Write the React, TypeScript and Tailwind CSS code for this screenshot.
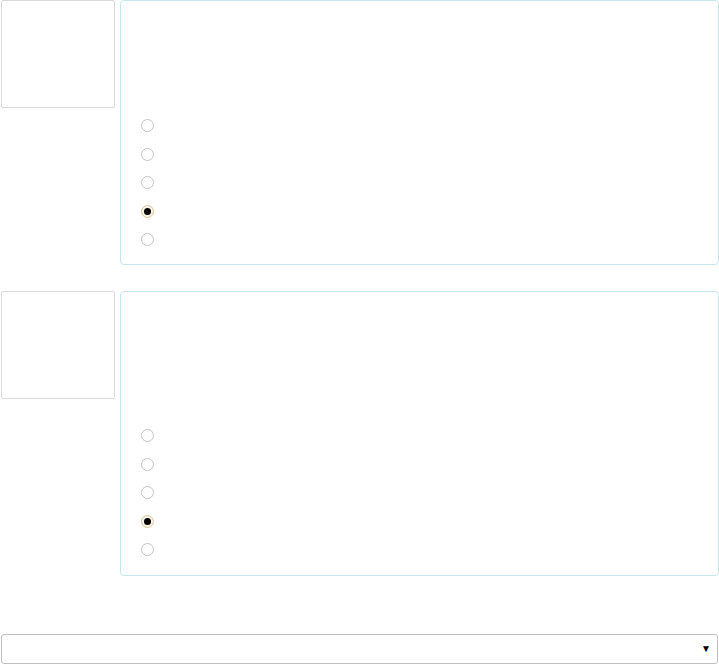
const QUESTIONS = [
  { id: 'q1', spacer: 'h-[118px]', pad: 'pb-[18px]', selected: 3 },
  { id: 'q2', spacer: 'h-[137px]', pad: 'pb-[19px]', selected: 3 },
]

function Radio({ checked }: { checked: boolean }) {
  return (
    <span
      className={
        checked
          ? 'w-[13px] h-[13px] rounded-full border border-[#dcc4a0] bg-[#fbf3e6] flex items-center justify-center'
          : 'w-[13px] h-[13px] rounded-full border border-[#c4c4c4] bg-white'
      }
    >
      {checked && <span className="w-[7px] h-[7px] rounded-full bg-black" />}
    </span>
  )
}

export default function App() {
  return (
    <div className="w-[719px] h-[664px] bg-white flex flex-col font-['Liberation_Sans',sans-serif]">
      {QUESTIONS.map((q, qi) => (
        <div key={q.id} className={qi === 0 ? 'flex gap-[5px] pl-px' : 'flex gap-[5px] pl-px mt-[26px]'}>
          {/* Thumbnail */}
          <div className="w-[114px] h-[108px] border border-[#dadada] rounded-[2px] shrink-0" />

          {/* Card */}
          <div className={'flex-1 border border-[#c5e6ef] rounded-[4px] pl-[20px] ' + q.pad}>
            <div className={q.spacer} />
            <div className="flex flex-col gap-[15.5px]">
              {[0, 1, 2, 3, 4].map((i) => (
                <div key={i} className="h-[13px] flex items-center">
                  <Radio checked={i === q.selected} />
                </div>
              ))}
            </div>
          </div>
        </div>
      ))}

      {/* Select */}
      <div className="mt-[58px] mx-px h-[30px] border border-[#c0c0c0] rounded-[3px] flex items-center justify-end pr-[6px]">
        <span className="text-[10px] text-black leading-none">▼</span>
      </div>
    </div>
  )
}
